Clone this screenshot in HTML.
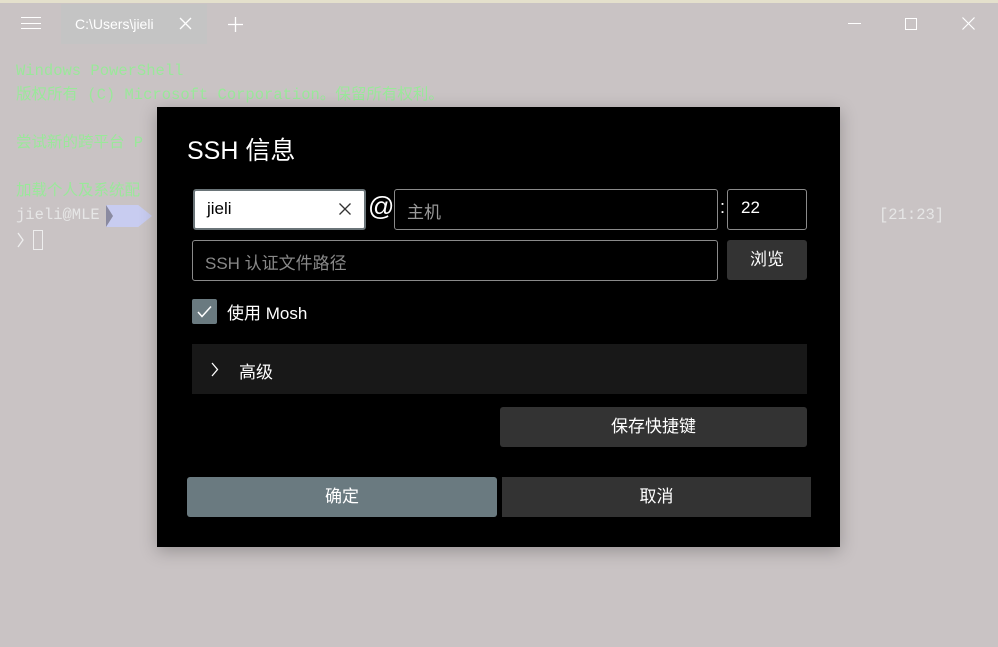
<!DOCTYPE html>
<html><head><meta charset="utf-8"><style>
*{margin:0;padding:0;box-sizing:border-box}
body{width:998px;height:647px;overflow:hidden;background:#c9c3c4;position:relative;font-family:"Liberation Sans","Noto Sans CJK SC",sans-serif}
.top{position:absolute;left:0;top:0;width:998px;height:3px;background:#e4e0cc}
.ab{position:absolute}
.term{position:absolute;left:16px;font-family:"Liberation Mono","Noto Sans CJK SC",monospace;font-size:15.5px;color:#9ae89a;white-space:pre;line-height:24px}
.dlg{position:absolute;left:157px;top:107px;width:683px;height:440px;background:#000;box-shadow:0 4px 16px rgba(0,0,0,.25)}
.box{position:absolute;border:1px solid #8a8a8a;border-radius:3px;color:#fff;font-size:17px}
.btn{position:absolute;background:#333;color:#fff;font-size:17px;text-align:center;border-radius:3px}
</style></head><body>
<div class="top"></div>
<div class="ab" style="left:21px;top:17px;width:20px;height:1px;background:#fff;box-shadow:0 6px 0 #fff,0 11px 0 #fff"></div>
<div class="ab" style="left:61px;top:4px;width:146px;height:40px;background:#c4c4c4"></div>
<div class="ab" style="left:75px;top:16px;color:#fff;font-size:14px">C:\Users\jieli</div>
<svg class="ab" style="left:179px;top:17px" width="13" height="13"><path d="M1 1L12 12M12 1L1 12" stroke="#fff" stroke-width="1.3"/></svg>
<svg class="ab" style="left:228px;top:17px" width="15" height="15"><path d="M7.5 0V15M0 7.5H15" stroke="#fff" stroke-width="1.3"/></svg>
<div class="ab" style="left:848px;top:23px;width:13px;height:1px;background:#fff"></div>
<div class="ab" style="left:905px;top:18px;width:12px;height:12px;border:1px solid #fff"></div>
<svg class="ab" style="left:962px;top:17px" width="13" height="13"><path d="M0.5 0.5L12.5 12.5M12.5 0.5L0.5 12.5" stroke="#fff" stroke-width="1.2"/></svg>
<div class="term" style="top:59px">Windows PowerShell
版权所有 (C) Microsoft Corporation。保留所有权利。

尝试新的跨平台 P

加载个人及系统配</div>
<div class="term" style="top:203px;color:#e6e6e6">jieli@MLE</div>
<div class="ab" style="left:106px;top:205px;width:46px;height:22px;background:#c8ccf0;clip-path:polygon(0 0,70% 0,100% 50%,70% 100%,0 100%,15% 50%)"></div>
<div class="ab" style="left:106px;top:205px;width:7px;height:22px;background:#8a8aa0;clip-path:polygon(0 0,100% 50%,0 100%)"></div>
<svg class="ab" style="left:17px;top:232px" width="8" height="16"><path d="M1 1L6 8L1 15" stroke="#eee" stroke-width="1.3" fill="none"/></svg>
<div class="ab" style="left:33px;top:230px;width:10px;height:20px;border:1px solid #eee"></div>
<div class="term" style="left:879px;top:203px;color:#e6e6e6">[21:23]</div>

<div class="dlg">
<div class="ab" style="left:30px;top:24px;color:#fff;font-size:25px">SSH 信息</div>
<div class="box" style="left:36px;top:82px;width:173px;height:41px;background:#fff;border:2px solid #6a7478;color:#000;padding:8px 0 0 12px">jieli<svg style="position:absolute;right:13px;top:12px" width="12" height="12"><path d="M0.5 0.5L11.5 11.5M11.5 0.5L0.5 11.5" stroke="#333" stroke-width="1.3"/></svg></div>
<div class="ab" style="left:211px;top:84px;color:#fff;font-size:26px">@</div>
<div class="box" style="left:237px;top:82px;width:324px;height:41px;color:#999;padding:8px 0 0 12px">主机</div>
<div class="ab" style="left:563px;top:90px;color:#fff;font-size:18px">:</div>
<div class="box" style="left:570px;top:82px;width:80px;height:41px;padding:8px 0 0 13px">22</div>
<div class="box" style="left:35px;top:133px;width:526px;height:41px;color:#888;padding:8px 0 0 12px">SSH 认证文件路径</div>
<div class="btn" style="left:570px;top:133px;width:80px;height:40px;line-height:40px">浏览</div>
<div class="ab" style="left:35px;top:192px;width:25px;height:25px;background:#6a7a80;border-radius:2px"><svg style="position:absolute;left:5px;top:6px" width="15" height="13"><path d="M1 7L5 11.5L14 1.5" stroke="#fff" stroke-width="1.5" fill="none"/></svg></div>
<div class="ab" style="left:70px;top:192px;color:#fff;font-size:17px">使用 Mosh</div>
<div class="ab" style="left:35px;top:237px;width:615px;height:50px;background:#181818"></div>
<svg class="ab" style="left:54px;top:255px" width="8" height="15"><path d="M1 1L6.5 7.5L1 14" stroke="#fff" stroke-width="1.3" fill="none"/></svg>
<div class="ab" style="left:82px;top:251px;color:#fff;font-size:17px">高级</div>
<div class="btn" style="left:343px;top:300px;width:307px;height:40px;line-height:40px">保存快捷键</div>
<div class="btn" style="left:30px;top:370px;width:310px;height:40px;line-height:40px;background:#6a7a80">确定</div>
<div class="btn" style="left:345px;top:370px;width:309px;height:40px;line-height:40px;border-radius:0">取消</div>
</div>
</body></html>
